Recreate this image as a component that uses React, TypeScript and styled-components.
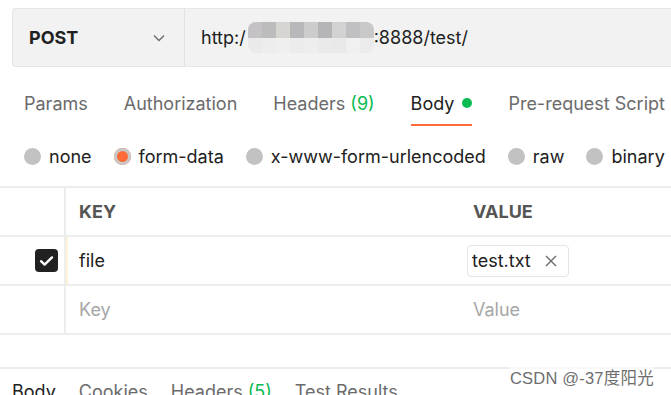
import React from 'react';
import styled, { createGlobalStyle } from 'styled-components';

const GlobalStyle = createGlobalStyle`
  html, body {
    margin: 0;
    padding: 0;
    background: #ffffff;
    overflow: hidden;
  }
  body {
    font-family: Inter, "Noto Sans", "Noto Sans CJK SC", sans-serif;
    color: #212121;
  }
`;

const Page = styled.div`
  position: relative;
  width: 671px;
  height: 395px;
  overflow: hidden;
  padding-top: 8px;
  box-sizing: border-box;
`;

const UrlBar = styled.div`
  display: flex;
  height: 59px;
  margin-left: 12px;
  background: #f2f2f2;
  border: 1px solid #e6e6e6;
  border-right: none;
  border-radius: 4px 0 0 4px;
  box-sizing: border-box;
`;

const Method = styled.div`
  width: 172px;
  display: flex;
  align-items: center;
  justify-content: space-between;
  padding: 0 18px 0 16px;
  box-sizing: border-box;
  border-right: 1px solid #e2e2e2;
  font-size: 18px;
  font-weight: 700;
  color: #212121;
`;

const Url = styled.div`
  display: flex;
  align-items: center;
  padding-left: 16px;
  font-size: 18px;
  color: #212121;
`;

const Mosaic = styled.div`
  display: grid;
  grid-template-columns: repeat(9, 14px);
  grid-template-rows: 16px 15px;
  margin-left: 2px;
  border-radius: 8px;
  overflow: hidden;
  filter: blur(0.6px);
`;

const Cell = styled.div<{ $shade: string }>`
  background: ${p => p.$shade};
`;

const Tabs = styled.div`
  display: flex;
  height: 59px;
  padding-left: 24px;
  gap: 36px;
  align-items: stretch;
`;

const Tab = styled.div<{ $active?: boolean }>`
  display: flex;
  align-items: center;
  gap: 8px;
  font-size: 18px;
  color: ${p => (p.$active ? '#212121' : '#6b6b6b')};
  border-bottom: 2px solid ${p => (p.$active ? '#ff6c37' : 'transparent')};
  padding-top: 15px;
  box-sizing: border-box;
  white-space: nowrap;
`;

const Count = styled.span`
  color: #0cbb52;
`;

const Dot = styled.span`
  width: 10px;
  height: 10px;
  border-radius: 50%;
  background: #0cbb52;
`;

const Radios = styled.div`
  display: flex;
  align-items: center;
  height: 60px;
  padding-left: 24px;
  gap: 22px;
  box-sizing: border-box;
`;

const Radio = styled.div`
  display: flex;
  align-items: center;
  gap: 8px;
  font-size: 18px;
  color: #212121;
  white-space: nowrap;
`;

const Circle = styled.span<{ $on?: boolean }>`
  width: 17px;
  height: 17px;
  border-radius: 50%;
  background: ${p => (p.$on ? '#ff6c37' : '#c2c2c2')};
  box-shadow: ${p => (p.$on ? 'inset 0 0 0 3px #c8c8c8' : 'none')};
  box-sizing: border-box;
`;

const Table = styled.div`
  border-top: 2px solid #ededed;
  display: grid;
  grid-template-columns: 66px 394px 1fr;
`;

const Td = styled.div<{ $first?: boolean; $hint?: boolean; $head?: boolean; $muted?: boolean }>`
  height: 49px;
  display: flex;
  align-items: center;
  box-sizing: border-box;
  border-bottom: 2px solid #ededed;
  border-right: ${p => (p.$first ? '2px solid #ededed' : 'none')};
  border-left: ${p => (p.$hint ? '2px solid #fdf3d6' : 'none')};
  padding-left: ${p => (p.$first ? '0' : p.$hint ? '11px' : '13px')};
  justify-content: ${p => (p.$first ? 'flex-end' : 'flex-start')};
  padding-right: ${p => (p.$first ? '6px' : '0')};
  font-size: 18px;
  font-weight: ${p => (p.$head ? 700 : 400)};
  color: ${p => (p.$head ? '#555555' : p.$muted ? '#a6a6a6' : '#212121')};
`;

const Check = styled.span`
  width: 23px;
  height: 23px;
  border-radius: 4px;
  background: #212121;
  display: flex;
  align-items: center;
  justify-content: center;
`;

const Chip = styled.div`
  display: flex;
  align-items: center;
  gap: 14px;
  height: 30px;
  padding: 0 11px 0 4px;
  margin-left: -6px;
  border: 1px solid #e4e4e4;
  border-radius: 4px;
  font-size: 18px;
  color: #212121;
`;

const Spacer = styled.div`
  height: 34px;
  border-bottom: 2px solid #ededed;
  box-sizing: border-box;
`;

const BottomTabs = styled.div`
  display: flex;
  gap: 23px;
  padding-left: 12px;
  padding-top: 12px;
  font-size: 18px;
  color: #6b6b6b;
  white-space: nowrap;
`;

const BottomTab = styled.span<{ $active?: boolean }>`
  color: ${p => (p.$active ? '#212121' : '#6b6b6b')};
`;

const Watermark = styled.div`
  position: absolute;
  left: 510px;
  top: 365px;
  font-family: "Liberation Sans", "Noto Sans CJK SC", sans-serif;
  font-size: 16.5px;
  color: #6e6e6e;
  background: rgba(255, 255, 255, 0.6);
  letter-spacing: 0.2px;
`;

const shades = [
  '#c4c2c4', '#bdbcbd', '#d6d5d2', '#b8b7b9', '#cccccc', '#b5b4b6', '#d2d2d2', '#c0bfc1', '#c8c8c8',
  '#eaeaea', '#ededed', '#efefef', '#ececec', '#eeeeee', '#eaeaea', '#e9e9e9', '#f0f0f0', '#ebebeb',
];

const App = () => {
  return (
    <Page>
      <GlobalStyle />
      <UrlBar>
        <Method>
          <span>POST</span>
          <svg width="14" height="14" viewBox="0 0 14 14">
            <path d="M2 4.5 L7 9.5 L12 4.5" fill="none" stroke="#6b6b6b" strokeWidth="1.4" />
          </svg>
        </Method>
        <Url>
          <span>http:/</span>
          <Mosaic>
            {shades.map((s, i) => (
              <Cell key={i} $shade={s} />
            ))}
          </Mosaic>
          <span>:8888/test/</span>
        </Url>
      </UrlBar>
      <Tabs>
        <Tab>Params</Tab>
        <Tab>Authorization</Tab>
        <Tab>
          <span>
            Headers <Count>(9)</Count>
          </span>
        </Tab>
        <Tab $active>
          Body <Dot />
        </Tab>
        <Tab>Pre-request Script</Tab>
      </Tabs>
      <Radios>
        <Radio>
          <Circle />
          none
        </Radio>
        <Radio>
          <Circle $on />
          form-data
        </Radio>
        <Radio>
          <Circle />
          x-www-form-urlencoded
        </Radio>
        <Radio>
          <Circle />
          raw
        </Radio>
        <Radio>
          <Circle />
          binary
        </Radio>
      </Radios>
      <Table>
        <Td $first />
        <Td $head>KEY</Td>
        <Td $head>VALUE</Td>
        <Td $first>
          <Check>
            <svg width="15" height="12" viewBox="0 0 15 12">
              <path d="M2 6.2 L5.6 9.6 L13 2.4" fill="none" stroke="#ffffff" strokeWidth="2.4" strokeLinecap="round" strokeLinejoin="round" />
            </svg>
          </Check>
        </Td>
        <Td $hint>file</Td>
        <Td>
          <Chip>
            test.txt
            <svg width="12" height="12" viewBox="0 0 12 12">
              <path d="M1 1 L11 11 M11 1 L1 11" stroke="#6b6b6b" strokeWidth="1.4" />
            </svg>
          </Chip>
        </Td>
        <Td $first />
        <Td $muted>Key</Td>
        <Td $muted>Value</Td>
      </Table>
      <Spacer />
      <BottomTabs>
        <BottomTab $active>Body</BottomTab>
        <BottomTab>Cookies</BottomTab>
        <BottomTab>
          Headers <Count>(5)</Count>
        </BottomTab>
        <BottomTab>Test Results</BottomTab>
      </BottomTabs>
      <Watermark>CSDN @-37度阳光</Watermark>
    </Page>
  );
};

export default App;
